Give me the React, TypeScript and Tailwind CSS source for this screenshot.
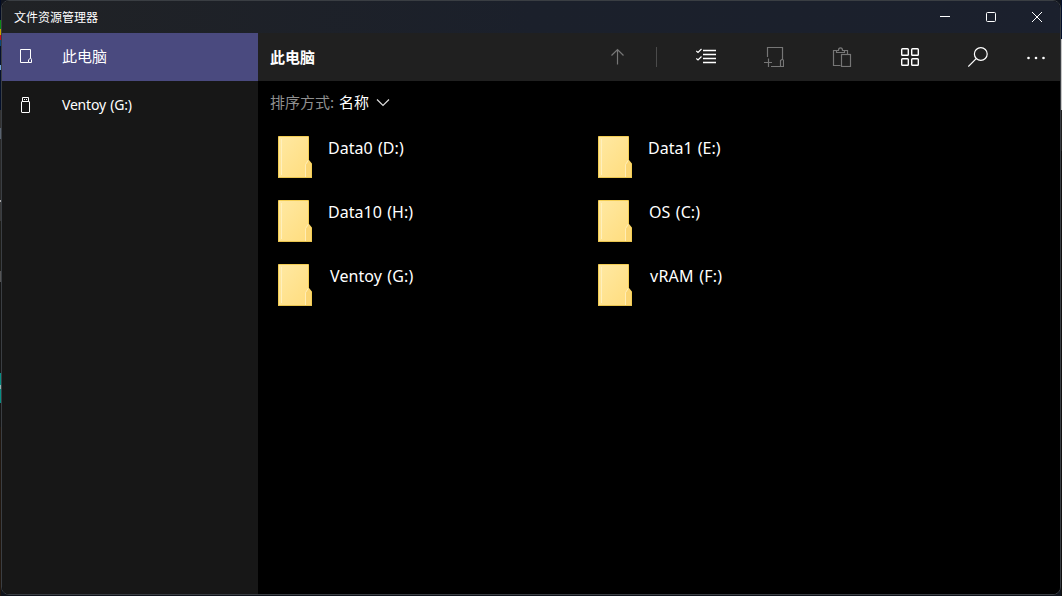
import React from 'react';

const uiFont = "font-['Noto_Sans','Noto_Sans_CJK_SC',sans-serif]";
const cjkFont = "font-['Noto_Sans_CJK_SC',sans-serif]";

type Segment = { height: string; color: string };

const desktopEdge: Segment[] = [
  { height: 'h-[20px]', color: 'bg-[#020b24]' },
  { height: 'h-[9px]', color: 'bg-[#0b8a14]' },
  { height: 'h-[6px]', color: 'bg-[#c9a400]' },
  { height: 'h-[5px]', color: 'bg-[#c40d1e]' },
  { height: 'h-[6px]', color: 'bg-[#0b4777]' },
  { height: 'h-[19px]', color: 'bg-[#04102c]' },
  { height: 'h-[5px]', color: 'bg-[#6c9fd6]' },
  { height: 'h-[40px]', color: 'bg-[#04102c]' },
  { height: 'h-[18px]', color: 'bg-[#333333]' },
  { height: 'h-[11px]', color: 'bg-[#59626e]' },
  { height: 'h-[61px]', color: 'bg-[#292929]' },
  { height: 'h-[2px]', color: 'bg-[#aaaaaa]' },
  { height: 'h-[19px]', color: 'bg-[#383838]' },
  { height: 'h-[50px]', color: 'bg-[#1d1d19]' },
  { height: 'h-[11px]', color: 'bg-[#555555]' },
  { height: 'h-[91px]', color: 'bg-[#151515]' },
  { height: 'h-[12px]', color: 'bg-[#078d83]' },
  { height: 'h-[4px]', color: 'bg-[#8fb5b2]' },
  { height: 'h-[14px]', color: 'bg-[#078d83]' },
  { height: 'h-[24px]', color: 'bg-[#151515]' },
  { height: 'h-[169px]', color: 'bg-[#21170f]' },
];

const drives = [
  { name: 'Data0 (D:)', spacing: 'ml-[16px] [word-spacing:1px] tracking-[0.05px]' },
  { name: 'Data1 (E:)', spacing: 'ml-[16px] [word-spacing:1px]' },
  { name: 'Data10 (H:)', spacing: 'ml-[16px] [word-spacing:1px] tracking-[0.05px]' },
  { name: 'OS (C:)', spacing: 'ml-[17px] [word-spacing:1px] tracking-[0.1px]' },
  { name: 'Ventoy (G:)', spacing: 'ml-[18px] [word-spacing:1px] tracking-[0.1px]' },
  { name: 'vRAM (F:)', spacing: 'ml-[18px] [word-spacing:1px] tracking-[0.25px]' },
];

function FolderIcon() {
  return (
    <svg width="34" height="42" viewBox="0 0 34 42" className="shrink-0">
      <defs>
        <linearGradient id="folder" x1="0" y1="0" x2="1" y2="1">
          <stop offset="0" stopColor="#ffe9a3" />
          <stop offset="1" stopColor="#ffdc7c" />
        </linearGradient>
      </defs>
      <path d="M.5.5H30.500V24L33.500 27.500V41.500H.5Z" fill="url(#folder)" stroke="#f3cd53" />
      <path d="M3.500 3V39" stroke="#fff0bd" fill="none" />
      <path d="M28 41V29L30.500 25H31.500L33 28V41Z" fill="#fbd675" />
      <path d="M27.500 41V28.500L30.500 24" stroke="#ffedb4" fill="none" />
      <path d="M0 41.500H34" stroke="#e9c44f" fill="none" />
    </svg>
  );
}

function Tool({ children, label, muted }: { children: React.ReactNode; label: string; muted?: boolean }) {
  return (
    <button aria-label={label} className={`flex h-12 w-[68px] items-center justify-center ${muted ? 'text-[#767676]' : 'text-white'}`}>
      <svg width="20" height="20" viewBox="0 0 20 20" fill="none" stroke="currentColor" strokeWidth="1.2">
        {children}
      </svg>
    </button>
  );
}

function TitleBar() {
  return (
    <header className="flex h-8 shrink-0 items-center bg-linear-to-r from-[#202225] via-[#1b202b] to-[#1b202d] pl-3 text-white">
      <span className={`${cjkFont} grow pb-px text-[12px] leading-4`}>文件资源管理器</span>
      <button aria-label="Minimize" className="flex h-8 w-[46px] items-center justify-center">
        <svg width="10" height="10" stroke="white"><path d="M0 4.500H10" /></svg>
      </button>
      <button aria-label="Maximize" className="flex h-8 w-[46px] items-center justify-center">
        <svg width="10" height="10" stroke="white" fill="none"><rect x=".5" y=".5" width="9" height="9" rx="1" /></svg>
      </button>
      <button aria-label="Close" className="flex h-8 w-[46px] items-center justify-center">
        <svg width="10" height="10" stroke="white"><path d="M0 0L10 10M10 0L0 10" /></svg>
      </button>
    </header>
  );
}

function Sidebar() {
  return (
    <nav className="w-64 shrink-0 bg-[#171717] text-white">
      <div className="flex h-12 items-center bg-[#4a4a7f]">
        <span className="flex w-12 justify-center pb-0.5">
          <svg width="14" height="16" viewBox="0 0 14 16" fill="none" stroke="white">
            <path d="M9.500 14.500H1.500V1.500H11.500V10M9.500 14.500V12L11.500 10L12.500 11.500V14.500Z" />
          </svg>
        </span>
        <span className={`${cjkFont} ml-3 pb-0.5 text-[15px] leading-5`}>此电脑</span>
      </div>
      <div className="flex h-12 items-center">
        <span className="flex w-12 justify-center">
          <svg width="10" height="16" viewBox="0 0 10 16" fill="none" stroke="white">
            <rect x=".5" y="4.500" width="8" height="11" rx=".5" />
            <path d="M1.500 4.500V.5H7.500V4.500M3.500 2V3M5.500 2V3" />
          </svg>
        </span>
        <span className={`${uiFont} ml-3 text-[14px] leading-5 tracking-[-0.2px] [word-spacing:1px]`}>Ventoy (G:)</span>
      </div>
    </nav>
  );
}

function Toolbar() {
  return (
    <div className="flex h-12 shrink-0 items-center bg-[#202020] text-white">
      <h1 className={`${cjkFont} grow pl-3 text-[15px] leading-5 font-bold`}>此电脑</h1>
      <Tool label="Up" muted>
        <path d="M9.500 17.500V2.500M3.500 8.500L9.500 2.500L15.500 8.500" />
      </Tool>
      <span className="mr-[15px] ml-1 h-5 w-px bg-[#4b4b4b]" />
      <Tool label="Select">
        <path d="M7 3.500H20M7 7.500H20M7 11.500H20M7 15.500H20" strokeWidth="1.4" />
        <path d="M.3 4L2 5.500L5.500 2M.3 11.500L2 13L5.500 9.500" />
      </Tool>
      <Tool label="New folder" muted>
        <path d="M3.500 10V.5H18.500V12M7 19.500H16.500V13.500L18.500 12L19.500 13.500V19.500H16.500M0 15.500H8M4.500 11.500V20" />
      </Tool>
      <Tool label="Paste" muted>
        <path d="M8.500 18.500H1.500V3.500H5.500M13 3.500H15.500V7.500M4.500 5.500V3.500H6.500C6.500 .1 10.500 .1 10.500 3.500H12.500V5.500Z" />
        <rect x="9.500" y="7.500" width="9" height="12" />
      </Tool>
      <Tool label="View">
        <g strokeWidth="1.4">
          <rect x="1.700" y="1.700" width="6.600" height="6.600" rx=".8" />
          <rect x="11.700" y="1.700" width="6.600" height="6.600" rx=".8" />
          <rect x="1.700" y="11.700" width="6.600" height="6.600" rx=".8" />
          <rect x="11.700" y="11.700" width="6.600" height="6.600" rx=".8" />
        </g>
      </Tool>
      <Tool label="Search">
        <circle cx="12.800" cy="7" r="6.400" />
        <path d="M8.200 11.600L.3 19.500" />
      </Tool>
      <button aria-label="More" className="flex h-12 w-12 items-center justify-center">
        <svg width="20" height="20" fill="white">
          <circle cx="2.500" cy="11" r="1.300" /><circle cx="10" cy="11" r="1.300" /><circle cx="17.500" cy="11" r="1.300" />
        </svg>
      </button>
    </div>
  );
}

export default function App() {
  return (
    <div className="flex h-[596px] w-[1062px] overflow-hidden bg-[#10141d]">
      <div className="w-px shrink-0">
        {desktopEdge.map((s, i) => <div key={i} className={`${s.height} ${s.color}`} />)}
      </div>
      <div className="flex h-[595px] w-[1060px] shrink-0 flex-col overflow-hidden rounded-lg border border-[#3a3e43] bg-black">
        <TitleBar />
        <div className="flex min-h-0 grow">
          <Sidebar />
          <main className="flex min-w-0 grow flex-col bg-black">
            <Toolbar />
            <div className={`${cjkFont} flex h-[44px] items-center pb-0.5 pl-3 text-[15px] leading-5 text-white`}>
              <span className="w-[65px] whitespace-nowrap text-[#8f8f8f]">排序方式:</span>
              <span className="ml-1">名称</span>
              <svg width="14" height="14" viewBox="0 0 14 14" className="ml-[7px]" fill="none" stroke="#dddddd" strokeWidth="1.200">
                <path d="M1 4.500L7 10.500L13 4.500" />
              </svg>
            </div>
            <ul className="grid grid-cols-[320px_320px] auto-rows-[64px] pl-5">
              {drives.map(({ name, spacing }) => (
                <li key={name} className="flex items-start pt-[11px]">
                  <FolderIcon />
                  <span className={`${uiFont} ${spacing} text-[16px] leading-6 text-white`}>{name}</span>
                </li>
              ))}
            </ul>
          </main>
        </div>
      </div>
      <div className="w-px shrink-0">
        <div className="h-[39px] bg-[#04102c]" />
        <div className="h-[71px] bg-[#c4c4c4]" />
        <div className="h-[41px] bg-[#202020]" />
        <div className="h-[445px] bg-[#101010]" />
      </div>
    </div>
  );
}
